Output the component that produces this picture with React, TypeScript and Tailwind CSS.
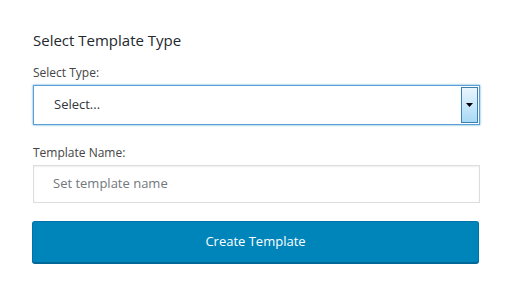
export default function App() {
  return (
    <div className="w-[509px] h-[293px] bg-white text-[#23282d]" style={{ fontFamily: '"Open Sans", "Noto Sans", sans-serif' }}>
      <div className="pl-[33px] pr-[29px] pt-[30px]">
        <h2 className="text-[15px] leading-[20px] font-normal text-[#23282d]">Select Template Type</h2>
        <label className="block mt-[15px] text-[12px] leading-[16px] text-[#444]">Select Type:</label>
        <div className="mt-[4px] h-[40px] flex border border-[#5b9dd9] shadow-[0_0_2px_rgba(30,140,190,0.8)] bg-white">
          <div className="flex-1 flex items-center pl-[20px] text-[13px] text-[#32373c]">Select...</div>
          <div className="w-[17px] my-[1px] mr-[1px] border border-[#3c7fb1] bg-gradient-to-b from-[#eaf6fd] to-[#a7d9f5] flex items-center justify-center">
            <svg width="7" height="4" viewBox="0 0 7 4"><path d="M0 0h7L3.5 4z" fill="#000" /></svg>
          </div>
        </div>
        <label className="block mt-[20px] text-[12px] leading-[16px] text-[#444]">Template Name:</label>
        <div className="mt-[4px] h-[38px] flex items-center border border-[#ddd] shadow-[inset_0_1px_2px_rgba(0,0,0,0.07)] pl-[19px] text-[13px] text-[#72777c]">Set template name</div>
        <button className="mt-[18px] w-full h-[42px] ml-[-1px] bg-[#0085ba] border border-[#0073aa] border-b-[#006799] rounded-[3px] shadow-[0_1px_0_#006799] text-white text-[13px]">Create Template</button>
      </div>
    </div>
  );
}
